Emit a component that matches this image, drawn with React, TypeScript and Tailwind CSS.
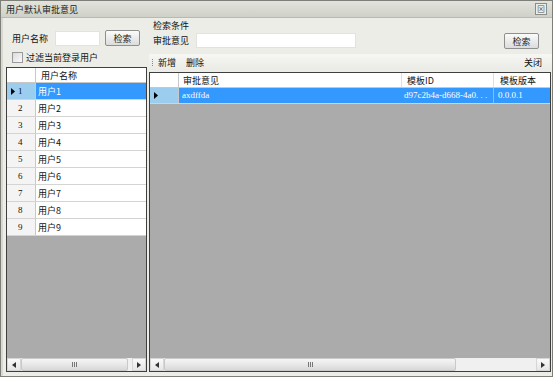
import React from 'react';

const font = { fontFamily: '"Noto Sans CJK SC", "Liberation Sans", sans-serif' };
const serif = { fontFamily: '"Liberation Serif", "Noto Sans CJK SC", serif' };

const Btn: React.FC<{ label: string; className?: string }> = ({ label, className = '' }) => (
  <div
    className={`h-[16px] w-[35px] flex items-center justify-center text-[9px] leading-none text-[#222] rounded-[2px] border border-[#8e8f8f] bg-gradient-to-b from-[#fbfbfb] to-[#dcdcdc] ${className}`}
  >
    {label}
  </div>
);

const Arrow: React.FC<{ dir: 'l' | 'r' }> = ({ dir }) => (
  <div className="w-[14px] h-full flex items-center justify-center bg-gradient-to-b from-[#fafafa] to-[#e6e6e6] border border-[#d6d6d6]">
    <svg width="4" height="6" viewBox="0 0 4 6">
      {dir === 'l' ? <path d="M4 0L0 3L4 6Z" fill="#333" /> : <path d="M0 0L4 3L0 6Z" fill="#333" />}
    </svg>
  </div>
);

const Grip = () => (
  <div className="flex gap-[1px]">
    <div className="w-[1px] h-[5px] bg-[#777]" />
    <div className="w-[1px] h-[5px] bg-[#777]" />
    <div className="w-[1px] h-[5px] bg-[#777]" />
  </div>
);

const Scroll: React.FC<{ thumb: number }> = ({ thumb }) => (
  <div className="h-[13px] flex bg-[#eeeeee] shrink-0">
    <Arrow dir="l" />
    <div
      className="h-full flex items-center justify-center bg-gradient-to-b from-[#f5f5f5] via-[#e8e8e8] to-[#d8d8d8] border border-[#c9c9c9] rounded-[2px]"
      style={{ width: thumb }}
    >
      <Grip />
    </div>
    <div className="flex-1 bg-[#f0f0f0]" />
    <Arrow dir="r" />
  </div>
);

const Pointer = () => (
  <svg width="4" height="7" viewBox="0 0 4 7">
    <path d="M0 0L4 3.5L0 7Z" fill="#000" />
  </svg>
);

export default function App() {
  const users = ['用户1', '用户2', '用户3', '用户4', '用户5', '用户6', '用户7', '用户8', '用户9'];
  return (
    <div className="w-[557px] h-[381px] bg-white text-[9px] text-[#111] whitespace-nowrap" style={font}>
      <div className="w-[553px] h-[377px] border border-[#7d7f78] flex flex-col bg-[#ecede7]">
        {/* title */}
        <div className="h-[17px] flex items-center justify-between pl-[5px] pr-[5px] bg-gradient-to-b from-[#e2e3dc] to-[#cfd1c8] border-b border-[#b8bab2]">
          <span className="text-[9px] leading-none text-[#222]">用户默认审批意见</span>
          <div className="w-[12px] h-[12px] border border-[#8a8c85] bg-[#eceee8] flex items-center justify-center text-[8px] leading-none text-[#555]">
            ⊠
          </div>
        </div>
        {/* body */}
        <div className="flex-1 flex pl-[2px] border-l-[2px] border-[#d8dad2]">
          {/* left */}
          <div className="w-[142px] flex flex-col">
            <div className="flex items-center h-[16px] mt-[12px] pl-[7px]">
              <span className="w-[43px] leading-none">用户名称</span>
              <div className="w-[45px] h-[15px] bg-white border border-[#e2e2e2]" />
              <Btn label="检索" className="ml-[5px]" />
            </div>
            <div className="flex items-center h-[12px] mt-[5px] pl-[7px] gap-[3px]">
              <div className="w-[11px] h-[11px] border border-[#9a9a9a] bg-gradient-to-br from-[#dcdcdc] to-[#fafafa]" />
              <span className="leading-none">过滤当前登录用户</span>
            </div>
            <div className="mt-[4px] ml-[1px] flex-1 flex flex-col border border-[#3f3f3f] bg-[#ababab]">
              <div className="h-[15px] flex bg-white border-b border-[#c8c8c8]">
                <div className="w-[29px] border-r border-[#c8c8c8]" />
                <div className="flex-1 pl-[5px] flex items-center leading-none">用户名称</div>
              </div>
              {users.map((u, i) => (
                <div key={u} className="h-[17px] flex border-b border-[#d4d4d4]">
                  <div
                    className={`w-[29px] flex items-center pl-[4px] gap-[3px] border-r border-[#c8c8c8] ${
                      i === 0 ? 'bg-[#9bcdef]' : 'bg-[#f4f4f4]'
                    }`}
                    style={serif}
                  >
                    {i === 0 ? <Pointer /> : <span className="w-[4px]" />}
                    <span className="leading-none text-[9px]">{i + 1}</span>
                  </div>
                  <div
                    className={`flex-1 flex items-center pl-[2px] leading-none ${
                      i === 0 ? 'bg-[#3399ff] text-white' : 'bg-white'
                    }`}
                  >
                    {u}
                  </div>
                </div>
              ))}
              <div className="flex-1" />
              <Scroll thumb={107} />
            </div>
            <div className="h-[4px]" />
          </div>
          {/* right */}
          <div className="flex-1 flex flex-col pl-[2px]">
            <div className="pl-[4px] mt-[3px] leading-[10px]">检索条件</div>
            <div className="flex items-center h-[16px] mt-[1px] pl-[4px] pr-[13px]">
              <span className="w-[43px] leading-none">审批意见</span>
              <div className="w-[160px] h-[15px] bg-white border border-[#e2e2e2]" />
              <div className="flex-1" />
              <Btn label="检索" className="mt-[2px]" />
            </div>
            <div className="h-[16px] mt-[6px] flex items-center pl-[3px] pr-[10px] bg-gradient-to-b from-[#f6f6f3] to-[#eaebe5]">
              <div className="flex flex-col gap-[1px] mr-[5px]">
                <div className="w-[1px] h-[1px] bg-[#888]" />
                <div className="w-[1px] h-[1px] bg-[#888]" />
                <div className="w-[1px] h-[1px] bg-[#888]" />
                <div className="w-[1px] h-[1px] bg-[#888]" />
              </div>
              <span className="leading-none">新增</span>
              <span className="leading-none ml-[10px]">删除</span>
              <div className="flex-1" />
              <span className="leading-none">关闭</span>
            </div>
            <div className="mt-[2px] mr-[1px] flex-1 flex flex-col border border-[#3f3f3f] bg-[#ababab]">
              <div className="h-[15px] flex bg-white border-b border-[#c8c8c8]">
                <div className="w-[29px] border-r border-[#c8c8c8]" />
                <div className="w-[223px] pl-[4px] flex items-center leading-none border-r border-[#e0e0e0]">审批意见</div>
                <div className="w-[92px] pl-[5px] flex items-center leading-none border-r border-[#e0e0e0]">模板ID</div>
                <div className="flex-1 pl-[6px] flex items-center leading-none">模板版本</div>
              </div>
              <div className="h-[16px] flex border-b border-[#d4d4d4]">
                <div className="w-[29px] flex items-center pl-[4px] bg-[#9bcdef] border-r border-[#c8c8c8]">
                  <Pointer />
                </div>
                <div className="w-[223px] pl-[3px] flex items-center leading-none bg-[#3399ff] text-white text-[9px]" style={serif}>
                  axdffda
                </div>
                <div
                  className="w-[92px] pl-[2px] flex items-center leading-none bg-[#3399ff] text-white text-[9px] overflow-hidden border-r border-[#7fbfff]"
                  style={serif}
                >
                  d97c2b4a-d668-4a0. . .
                </div>
                <div className="flex-1 pl-[4px] flex items-center leading-none bg-[#3399ff] text-white text-[9px]" style={serif}>
                  0.0.0.1
                </div>
              </div>
              <div className="flex-1" />
              <Scroll thumb={292} />
            </div>
            <div className="h-[4px]" />
          </div>
        </div>
      </div>
    </div>
  );
}
